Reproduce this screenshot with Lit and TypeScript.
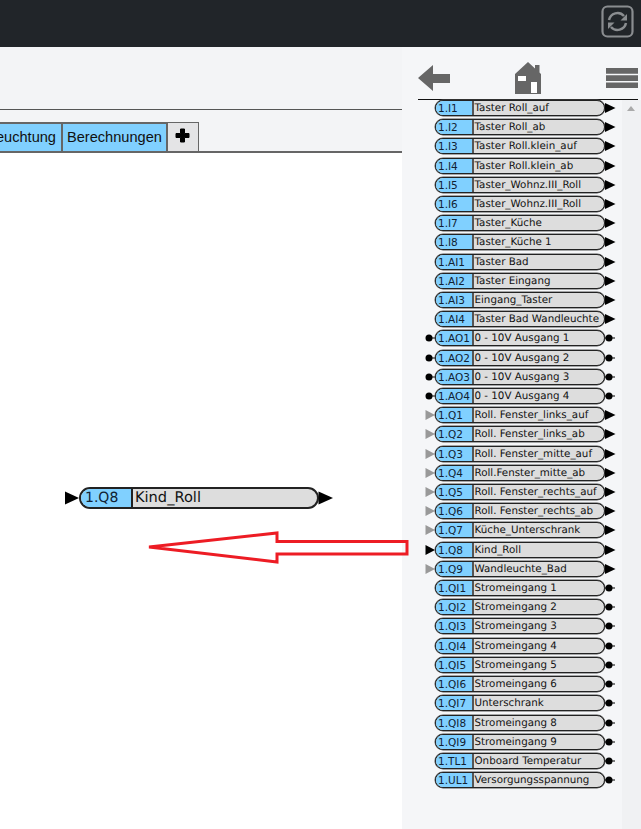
import { LitElement, html, css } from "lit";
import { customElement } from "lit/decorators.js";

type Row = [string, string, "none" | "dot" | "grey" | "black", "tri" | "dot"];
const rows: Row[] = [
  ["1.I1", "Taster Roll_auf", "none", "tri"],
  ["1.I2", "Taster Roll_ab", "none", "tri"],
  ["1.I3", "Taster Roll.klein_auf", "none", "tri"],
  ["1.I4", "Taster Roll.klein_ab", "none", "tri"],
  ["1.I5", "Taster_Wohnz.III_Roll", "none", "tri"],
  ["1.I6", "Taster_Wohnz.III_Roll", "none", "tri"],
  ["1.I7", "Taster_Küche", "none", "tri"],
  ["1.I8", "Taster_Küche 1", "none", "tri"],
  ["1.AI1", "Taster Bad", "none", "tri"],
  ["1.AI2", "Taster Eingang", "none", "tri"],
  ["1.AI3", "Eingang_Taster", "none", "tri"],
  ["1.AI4", "Taster Bad Wandleuchte", "none", "tri"],
  ["1.AO1", "0 - 10V Ausgang 1", "dot", "dot"],
  ["1.AO2", "0 - 10V Ausgang 2", "dot", "dot"],
  ["1.AO3", "0 - 10V Ausgang 3", "dot", "dot"],
  ["1.AO4", "0 - 10V Ausgang 4", "dot", "dot"],
  ["1.Q1", "Roll. Fenster_links_auf", "grey", "tri"],
  ["1.Q2", "Roll. Fenster_links_ab", "grey", "tri"],
  ["1.Q3", "Roll. Fenster_mitte_auf", "grey", "tri"],
  ["1.Q4", "Roll.Fenster_mitte_ab", "grey", "tri"],
  ["1.Q5", "Roll. Fenster_rechts_auf", "grey", "tri"],
  ["1.Q6", "Roll. Fenster_rechts_ab", "grey", "tri"],
  ["1.Q7", "Küche_Unterschrank", "grey", "tri"],
  ["1.Q8", "Kind_Roll", "black", "tri"],
  ["1.Q9", "Wandleuchte_Bad", "grey", "tri"],
  ["1.QI1", "Stromeingang 1", "none", "dot"],
  ["1.QI2", "Stromeingang 2", "none", "dot"],
  ["1.QI3", "Stromeingang 3", "none", "dot"],
  ["1.QI4", "Stromeingang 4", "none", "dot"],
  ["1.QI5", "Stromeingang 5", "none", "dot"],
  ["1.QI6", "Stromeingang 6", "none", "dot"],
  ["1.QI7", "Unterschrank", "none", "dot"],
  ["1.QI8", "Stromeingang 8", "none", "dot"],
  ["1.QI9", "Stromeingang 9", "none", "dot"],
  ["1.TL1", "Onboard Temperatur", "none", "dot"],
  ["1.UL1", "Versorgungsspannung", "none", "dot"],
];

const leftMark = (k: Row[2]) => {
  if (k === "none") return html`<svg class="mark" width="10" height="12" viewBox="0 0 10 12"></svg>`;
  if (k === "dot")
    return html`<svg class="mark" width="10" height="12" viewBox="0 0 10 12"><path d="M4 6h6" stroke="#000" stroke-width="1"/><circle cx="4" cy="6" r="3.5" fill="#000"/></svg>`;
  const c = k === "grey" ? "#999" : "#000";
  return html`<svg class="mark" width="10" height="12" viewBox="0 0 10 12"><path d="M0.5 1 L10 6 L0.5 11Z" fill="${c}"/></svg>`;
};
const rightMark = (k: Row[3]) =>
  k === "tri"
    ? html`<svg class="mark" width="11" height="12" viewBox="0 0 11 12"><path d="M0 1 L10.5 6 L0 11Z" fill="#000"/></svg>`
    : html`<svg class="mark" width="11" height="12" viewBox="0 0 11 12"><path d="M0 6h10" stroke="#000" stroke-width="1"/><circle cx="4" cy="6" r="3.5" fill="#000"/></svg>`;

@customElement("app-root")
export class AppRoot extends LitElement {
  static styles = css`
    :host { display: block; width: 641px; height: 829px; overflow: hidden; background: #fff; font-family: "Liberation Sans", Arial, sans-serif; }
    .top { height: 47px; background: #212529; display: flex; justify-content: flex-end; align-items: flex-start; padding: 5px 7px 0 0; box-sizing: border-box; }
    .main { display: flex; height: 782px; }
    .left { width: 402px; flex: none; display: flex; flex-direction: column; position: relative; z-index: 1; }
    .head { height: 62px; flex: none; background: #f3f4f6; border-bottom: 1px solid #555; }
    .tabs { height: 43px; flex: none; background: #f3f4f6; border-bottom: 2px solid #666; box-sizing: border-box; display: flex; align-items: flex-end; overflow: hidden; }
    .tab { height: 29px; box-sizing: border-box; background: #80d0ff; border: 2px solid #666; border-bottom: 0; border-left: 0; font-size: 14.6px; line-height: 27px; padding: 0 4px; color: #111; white-space: nowrap; flex: none; }
    .tab.first { width: 63px; padding: 0; overflow: hidden; display: flex; justify-content: flex-end; }
    .tab.first span { flex: none; padding-right: 5px; }
    .tab.add { width: 31px; background: #e4e4e6; border-width: 1px 1px 0 0; padding: 0; display: flex; justify-content: center; align-items: flex-start; }
    .plus { margin-top: 5px; display: block; }
    .canvas { flex: 1; position: relative; background: #fff; }
    .node { position: absolute; left: 65px; top: 334px; display: flex; align-items: center; }
    .pill { box-sizing: border-box; border: 1px solid #222; box-shadow: 0 0 0 0.5px #555; background: #ddd; display: flex; overflow: hidden; }
    .big { width: 240px; height: 22px; border-radius: 11px; border-width: 2px; box-shadow: none; margin-right: -1px; }
    .big .id { width: 52px; background: #80d0ff; border-right: 2px solid #222; font: 14px/18px "DejaVu Sans", sans-serif; text-rendering: geometricPrecision; padding-left: 4px; box-sizing: border-box; color: #123; }
    .big .nm { font: 14.6px/18px "DejaVu Sans", sans-serif; text-rendering: geometricPrecision; padding-left: 2px; color: #111; }
    .arrow { position: absolute; left: 145px; top: 378px; }
    .side { width: 239px; flex: none; background: #f5f6f8; display: flex; flex-direction: column; }
    .icons { height: 52px; flex: none; margin-left: 16px; width: 220px; border-bottom: 1px solid #111; display: flex; justify-content: space-between; align-items: flex-start; box-sizing: content-box; }
    .icons .back { margin-top: 18px; }
    .icons .house { margin-top: 15px; }
    .icons .menu { margin-top: 21px; }
    .scrollarea { flex: 1; display: flex; min-height: 0; }
    .list { width: 220px; flex: none; padding-left: 23px; margin-top: -1.6px; box-sizing: border-box; display: flex; flex-direction: column; }
    .row { height: 19.21px; flex: none; display: flex; align-items: center; }
    .row .pill { width: 169.5px; height: 16px; border-radius: 8px; }
    .mark { flex: none; display: block; }
    .id { width: 37.5px; flex: none; background: #80d0ff; border-right: 2px solid #555; box-sizing: border-box; font: 10.5px/14.5px "DejaVu Sans", sans-serif; padding-left: 2px; color: #123; }
    .nm { font: 10.3px/14.5px "DejaVu Sans", sans-serif; text-rendering: geometricPrecision; padding-left: 1px; color: #111; white-space: nowrap; }
    .scroll { flex: 1; background: #f0f1f3; position: relative; }
    .scroll svg { position: absolute; left: 5px; top: 6px; }
  `;

  render() {
    return html`
      <div class="top">
        <svg width="33" height="33" viewBox="0 0 33 33" fill="none">
          <rect x="1.5" y="1.5" width="30" height="30" rx="5" stroke="#8a8d90" stroke-width="2.2"/>
          <path d="M8 15a8.700 8.700 0 0 1 15-4" stroke="#8a8d90" stroke-width="2.500"/>
          <path d="M25 18a8.700 8.700 0 0 1-15 4" stroke="#8a8d90" stroke-width="2.500"/>
          <path d="M26 9v6.500h-6.500z" fill="#8a8d90"/>
          <path d="M7 24v-6.500h6.500z" fill="#8a8d90"/>
        </svg>
      </div>
      <div class="main">
        <div class="left">
          <div class="head"></div>
          <div class="tabs">
            <div class="tab first"><span>euchtung</span></div>
            <div class="tab">Berechnungen</div>
            <div class="tab add">
              <svg class="plus" width="15" height="15" viewBox="0 0 15 15"><path d="M5.500 1h4v4.500H14v4H9.500V14h-4V9.500H1v-4h4.500z" fill="#000" stroke="#000" stroke-linejoin="round"/></svg>
            </div>
          </div>
          <div class="canvas">
            <div class="node">
              <svg width="14" height="14" viewBox="0 0 14 14"><path d="M0 0.500 L14 7 L0 13.500Z" fill="#000"/></svg>
              <div class="pill big"><div class="id">1.Q8</div><div class="nm">Kind_Roll</div></div>
              <svg width="15" height="14" viewBox="0 0 15 14"><path d="M0.500 0.500 L15 7 L0.500 13.500Z" fill="#000"/></svg>
            </div>
            <svg class="arrow" width="266" height="36" viewBox="0 0 266 36" fill="none">
              <path d="M4 16 L132 2 V10.500 H262 V23 H132 V31 Z" stroke="#ed1c24" stroke-width="3"/>
            </svg>
          </div>
        </div>
        <div class="side">
          <div class="icons">
            <svg class="back" width="32" height="26" viewBox="0 0 32 26"><path d="M15 0 L0 13 L15 26 V18 H32 V9 H15Z" fill="#666"/></svg>
            <svg class="house" width="26" height="32" viewBox="0 0 26 32"><path d="M13 0 L20 6.500 V3 H24.500 V10.500 L26 12 V32 H0 V12Z" fill="#666"/><rect x="3" y="14" width="8" height="5" fill="#fff"/><rect x="16" y="20" width="6" height="11" fill="#fff"/></svg>
            <svg class="menu" width="32" height="20" viewBox="0 0 32 20"><path d="M0 0h32v5.800H0zM0 7.200h32v5.800H0zM0 14.400h32v5.600H0z" fill="#666"/></svg>
          </div>
          <div class="scrollarea">
            <div class="list">
              ${rows.map(
                (r) => html`<div class="row">
                  ${leftMark(r[2])}
                  <div class="pill"><div class="id">${r[0]}</div><div class="nm">${r[1]}</div></div>
                  ${rightMark(r[3])}
                </div>`
              )}
            </div>
            <div class="scroll">
              <svg width="8" height="5" viewBox="0 0 8 5"><path d="M0 5L4 0L8 5Z" fill="#aaa"/></svg>
            </div>
          </div>
        </div>
      </div>
    `;
  }
}
